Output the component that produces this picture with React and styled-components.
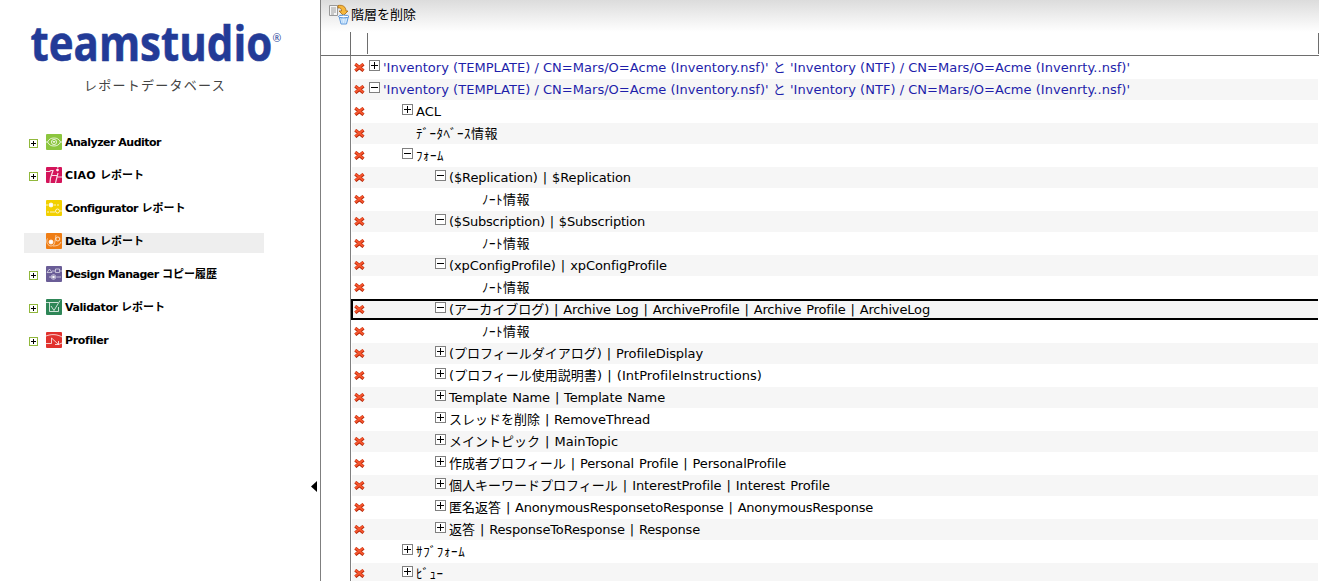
import React, { useLayoutEffect, useRef, useState } from "react";
import styled, { createGlobalStyle, css } from "styled-components";

const Global = createGlobalStyle`
  * { box-sizing: border-box; }
  body { margin: 0; background: #fff; overflow: hidden; }
`;

const Page = styled.div`
  display: flex;
  width: 100%;
  height: 581px;
  overflow: hidden;
  font-family: "DejaVu Sans", "Noto Sans CJK JP", sans-serif;
  font-size: 13px;
  color: #000;
`;

const Sidebar = styled.aside`
  position: relative;
  flex: 0 0 321px;
  border-right: 1px solid #7f7f7f;
  padding-top: 4px;
`;

const Logo = styled.svg`
  display: block;
  width: 260px;
  height: 73px;
  margin-left: 28px;
  overflow: visible;
`;

const Tagline = styled.div`
  height: 18px;
  margin: 0 0 0 84px;
  line-height: 18px;
  color: #444;
`;

const Menu = styled.nav`
  padding: 39px 0 0 24px;
`;

const MenuItem = styled.div`
  display: flex;
  align-items: flex-start;
  width: 240px;
  height: 20px;
  margin-bottom: 13px;
  background: ${(p) => (p.$active ? "#eee" : "transparent")};
  font-size: 11px;
  font-weight: 700;
  line-height: 18px;
`;

const ExpanderSlot = styled.span`
  display: flex;
  flex: 0 0 22px;
  padding: 5px 0 0 5px;
`;

const MenuIcon = styled.svg`
  flex: 0 0 16px;
  width: 16px;
  height: 16px;
  margin-right: 3px;
`;

const Collapse = styled.svg`
  position: absolute;
  right: 3px;
  top: 481px;
  width: 6px;
  height: 11px;
`;

const Main = styled.main`
  flex: 1;
  min-width: 0;
`;

const Toolbar = styled.div`
  display: flex;
  height: 32px;
  padding: 4px 0 0 8px;
  background: linear-gradient(#dcdcdc, #fff);
`;

const ToolbarLabel = styled.div`
  height: 20px;
  margin-left: 1px;
  line-height: 21px;
`;

const Columns = styled.div`
  display: flex;
  height: 24px;
  border-bottom: 1px solid #6e6e6e;
`;

const Column = styled.div`
  width: ${(p) => p.$width};
  height: ${(p) => (p.$tall ? "23px" : "21px")};
  margin-top: ${(p) => (p.$tall ? 0 : 1)}px;
  flex: ${(p) => (p.$width ? "none" : 1)};
  border-right: 1px solid #6e6e6e;
`;

const Tree = styled.div`
  height: 525px;
  margin-left: 29px;
  padding-top: 1px;
  border-left: 1px solid #7f7f7f;
  overflow: hidden;
`;

const Row = styled.div`
  display: flex;
  height: 21px;
  margin: 0 1px 1px ${(p) => (p.$selected ? 0 : 1)}px;
  padding-left: ${(p) => (p.$selected ? 0 : 1)}px;
  background: ${(p) => (p.$striped ? "#f6f6f6" : "#fff")};
  color: ${(p) => (p.$root ? "#1e1eaa" : "#000")};
  white-space: nowrap;
  ${(p) =>
    p.$selected &&
    css`
      border: 2px solid #000;
      border-right: 0;
      & > * { margin-top: -2px; }
    `}
`;

const DeleteSlot = styled.span`
  flex: none;
  width: 16px;
  padding: 6px 0 0 1px;
`;

const BoxSlot = styled.span`
  display: flex;
  flex: none;
  width: ${(p) => (p.$level ? 14 + p.$level * 33 : 14)}px;
  padding: 3px 3px 0 0;
  justify-content: flex-end;
`;

const RowText = styled.span`
  height: 21px;
  line-height: 21px;
  word-spacing: ${(p) => (p.$root ? 0 : 1)}px;
`;

const Measured = styled.span`
  display: inline-block;
  white-space: pre;
`;

const FullWidth = styled.span`
  letter-spacing: 0;
`;

const Drawing = styled.svg`
  display: block;
  flex: none;
`;

const WIDE = /([\u3040-\u30ff\u4e00-\u9fff]+)/;

function Fitted({ text, width }) {
  const ref = useRef(null);
  const [tracking, setTracking] = useState(0);
  const parts = text.split(WIDE).filter(Boolean);
  const narrow = parts.filter((p) => !WIDE.test(p)).join("").length;
  const total = narrow < 3 || /[\uff61-\uff9f]/.test(text);
  useLayoutEffect(() => {
    const natural = ref.current.getBoundingClientRect().width;
    setTracking((width - natural) / (total ? text.length : narrow));
  }, [text, width]);
  return (
    <Measured ref={ref} style={{ letterSpacing: tracking }}>
      {total ? text : parts.map((p, i) => (WIDE.test(p) ? <FullWidth key={i}>{p}</FullWidth> : p))}
    </Measured>
  );
}

const Toggle = ({ open }) => (
  <Drawing width="11" height="11" viewBox="0 0 11 11" shapeRendering="crispEdges">
    <rect x=".5" y=".5" width="10" height="10" fill="#fff" stroke="#808080" />
    <path d={open ? "M2 5.5h7" : "M2 5.5h7M5.5 2v7"} stroke="#000" />
  </Drawing>
);

const MenuToggle = () => (
  <Drawing width="9" height="9" viewBox="0 0 9 9" shapeRendering="crispEdges">
    <rect x=".5" y=".5" width="8" height="8" fill="#fff" stroke="#91b83c" />
    <path d="M2 4.5h5M4.5 2v5" stroke="#000" />
  </Drawing>
);

const Cross = () => (
  <Drawing width="11" height="9" viewBox="0 0 11 9">
    <path d="M1.300 1.200L9.500 7.800M9.500 1.200L1.300 7.800" stroke="#b82c0c" strokeWidth="3.300" />
    <path d="M1.300 1L9.300 7.300M9.300 1L1.300 7.300" stroke="#f8562f" strokeWidth="1.800" />
  </Drawing>
);

const TrashIcon = () => (
  <Drawing width="21" height="21" viewBox="0 0 21 21">
    <path d="M.5 1.500h8v10h-8z" fill="#f5f5f5" stroke="#999" />
    <path d="M2 4h5M2 6h5M2 8h5M2 10h3" stroke="#888" strokeWidth=".8" />
    <path d="M9 1.500c5-1 8 1.500 8 5.500h2l-4.500 4.500L10 7h2.500c0-2.500-1-3.500-3.500-3z" fill="#f6b73c" stroke="#a86a12" strokeWidth=".8" />
    <path d="M10 12h9.500l-2 8h-5.500z" fill="#d8ecff" stroke="#5f9add" />
    <path d="M12.500 14l1 5M16.500 14l-1 5" stroke="#b4d6f6" />
    <ellipse cx="14.700" cy="12.500" rx="5.200" ry="1.400" fill="#fff" stroke="#4f8dd6" />
  </Drawing>
);

const GLYPHS = {
  analyzer: (
    <>
      <path d="M0 8h1.500C3 5 5 4 8 4s5 1 6.500 4H16M1.500 8C3 11 5 12 8 12s5-1 6.500-4" />
      <circle cx="8" cy="8" r="2.600" />
      <path d="M7 7.500h2L8 8.800z" />
    </>
  ),
  ciao: (
    <>
      <path d="M0 4.500h3.500L5 3.500h2L4.500 11 4 16M12 6L9.500 16M6 8.500h5M11 10h5M12 0l-.3 1" strokeWidth="1.200" />
      <circle cx="11.500" cy="3" r="1" fill="#fff" />
    </>
  ),
  configurator: (
    <>
      <circle cx="5" cy="5" r="2" fill="#fff" />
      <path d="M0 5h2M8 5h2M11 5h2M1 12h2M4 12h5" />
      <circle cx="11.500" cy="11" r="2" />
      <path d="M14 11h2" />
    </>
  ),
  delta: (
    <>
      <circle cx="5" cy="9" r="2" fill="#fff" />
      <path d="M1.500 5.500C-.5 9 2 13 5 13c4 0 4-5 5-11M15 9c-1 3-4 4-8 4" strokeWidth=".7" />
      <circle cx="11.800" cy="6" r="2" />
    </>
  ),
  design: (
    <>
      <path d="M1 6.500L3.500 3 6 6.500zM6 5h3M9.500 3h4v3.500h-4zM14 5h2M3 11h2M10.500 11H15" strokeWidth=".7" />
      <circle cx="7.500" cy="11" r="2.300" strokeWidth=".7" />
      <circle cx="7.500" cy="11" r="1" fill="#fff" />
    </>
  ),
  validator: <path d="M0 3.500h12M3.500 3.500v9h9V8M5 7l3 4.500L14 1.500" />,
  profiler: <path d="M0 4c5-2 11-2 16 1M0 11.500h5.500V6l7 6.500V9M9 12.500h3.500L16 11" />,
};

const MENU = [
  ["analyzer", "#8cc63f", "Analyzer Auditor", 96, true],
  ["ciao", "#d4145a", "CIAO レポート", 79, true],
  ["configurator", "#f2d000", "Configurator レポート", 120, false],
  ["delta", "#ef7d14", "Delta レポート", 79, false],
  ["design", "#6a5d97", "Design Manager コピー履歴", 152, true],
  ["validator", "#2e8657", "Validator レポート", 100, true],
  ["profiler", "#e1322d", "Profiler", 43, true],
];

const COMPARISON =
  "'Inventory (TEMPLATE) / CN=Mars/O=Acme (Inventory.nsf)' と 'Inventory (NTF) / CN=Mars/O=Acme (Invenrty..nsf)'";

// [level, state, label, label width]
const ROWS = [
  [0, "closed", COMPARISON, 747],
  [0, "open", COMPARISON, 747],
  [1, "closed", "ACL", 25],
  [1, "leaf", "ﾃﾞｰﾀﾍﾞｰｽ情報", 83],
  [1, "open", "ﾌｫｰﾑ", 28],
  [2, "open", "($Replication) | $Replication", 182],
  [3, "leaf", "ﾉｰﾄ情報", 48],
  [2, "open", "($Subscription) | $Subscription", 196],
  [3, "leaf", "ﾉｰﾄ情報", 48],
  [2, "open", "(xpConfigProfile) | xpConfigProfile", 218],
  [3, "leaf", "ﾉｰﾄ情報", 48],
  [2, "open", "(アーカイブログ) | Archive Log | ArchiveProfile | Archive Profile | ArchiveLog", 481],
  [3, "leaf", "ﾉｰﾄ情報", 48],
  [2, "closed", "(プロフィールダイアログ) | ProfileDisplay", 254],
  [2, "closed", "(プロフィール使用説明書) | (IntProfileInstructions)", 313],
  [2, "closed", "Template Name | Template Name", 216],
  [2, "closed", "スレッドを削除 | RemoveThread", 201],
  [2, "closed", "メイントピック | MainTopic", 169],
  [2, "closed", "作成者プロフィール | Personal Profile | PersonalProfile", 337],
  [2, "closed", "個人キーワードプロフィール | InterestProfile | Interest Profile", 381],
  [2, "closed", "匿名返答 | AnonymousResponsetoResponse | AnonymousResponse", 424],
  [2, "closed", "返答 | ResponseToResponse | Response", 251],
  [1, "closed", "ｻﾌﾞﾌｫｰﾑ", 50],
  [1, "closed", "ﾋﾞｭｰ", 28],
];

const SELECTED = 11;

export default function App() {
  return (
    <>
      <Global />
      <Page>
        <Sidebar>
          <Logo viewBox="0 0 260 73">
            <text transform="translate(2.500 57) scale(.857 1)" fontFamily="Open Sans, sans-serif" fontWeight="700" fontSize="49" fill="#233b97" stroke="#233b97" strokeWidth=".6">
              teamstudio
            </text>
            <text x="244.500" y="38" fontFamily="Open Sans, sans-serif" fontSize="10.500" fill="#233b97">®</text>
          </Logo>
          <Tagline><Fitted text="レポートデータベース" width={142} /></Tagline>
          <Menu>
            {MENU.map(([icon, color, label, width, expandable]) => (
              <MenuItem key={icon} $active={icon === "delta"}>
                <ExpanderSlot>{expandable && <MenuToggle />}</ExpanderSlot>
                <MenuIcon viewBox="0 0 16 16">
                  <rect width="16" height="16" rx="1" fill={color} />
                  <g fill="none" stroke="#fff" strokeOpacity=".85" strokeWidth=".9">{GLYPHS[icon]}</g>
                </MenuIcon>
                <Fitted text={label} width={width} />
              </MenuItem>
            ))}
          </Menu>
          <Collapse viewBox="0 0 6 11"><path d="M6 0v11L0 5.500z" /></Collapse>
        </Sidebar>
        <Main>
          <Toolbar>
            <TrashIcon />
            <ToolbarLabel>階層を削除</ToolbarLabel>
          </Toolbar>
          <Columns>
            <Column $width="30px" $tall />
            <Column $width="17px" />
            <Column />
          </Columns>
          <Tree>
            {ROWS.map(([level, state, label, width], i) => (
              <Row key={i} $striped={i % 2 === 1} $root={level === 0} $selected={i === SELECTED}>
                <DeleteSlot><Cross /></DeleteSlot>
                <BoxSlot $level={level}>{state !== "leaf" && <Toggle open={state === "open"} />}</BoxSlot>
                <RowText $root={level === 0}><Fitted text={label} width={width} /></RowText>
              </Row>
            ))}
          </Tree>
        </Main>
      </Page>
    </>
  );
}
